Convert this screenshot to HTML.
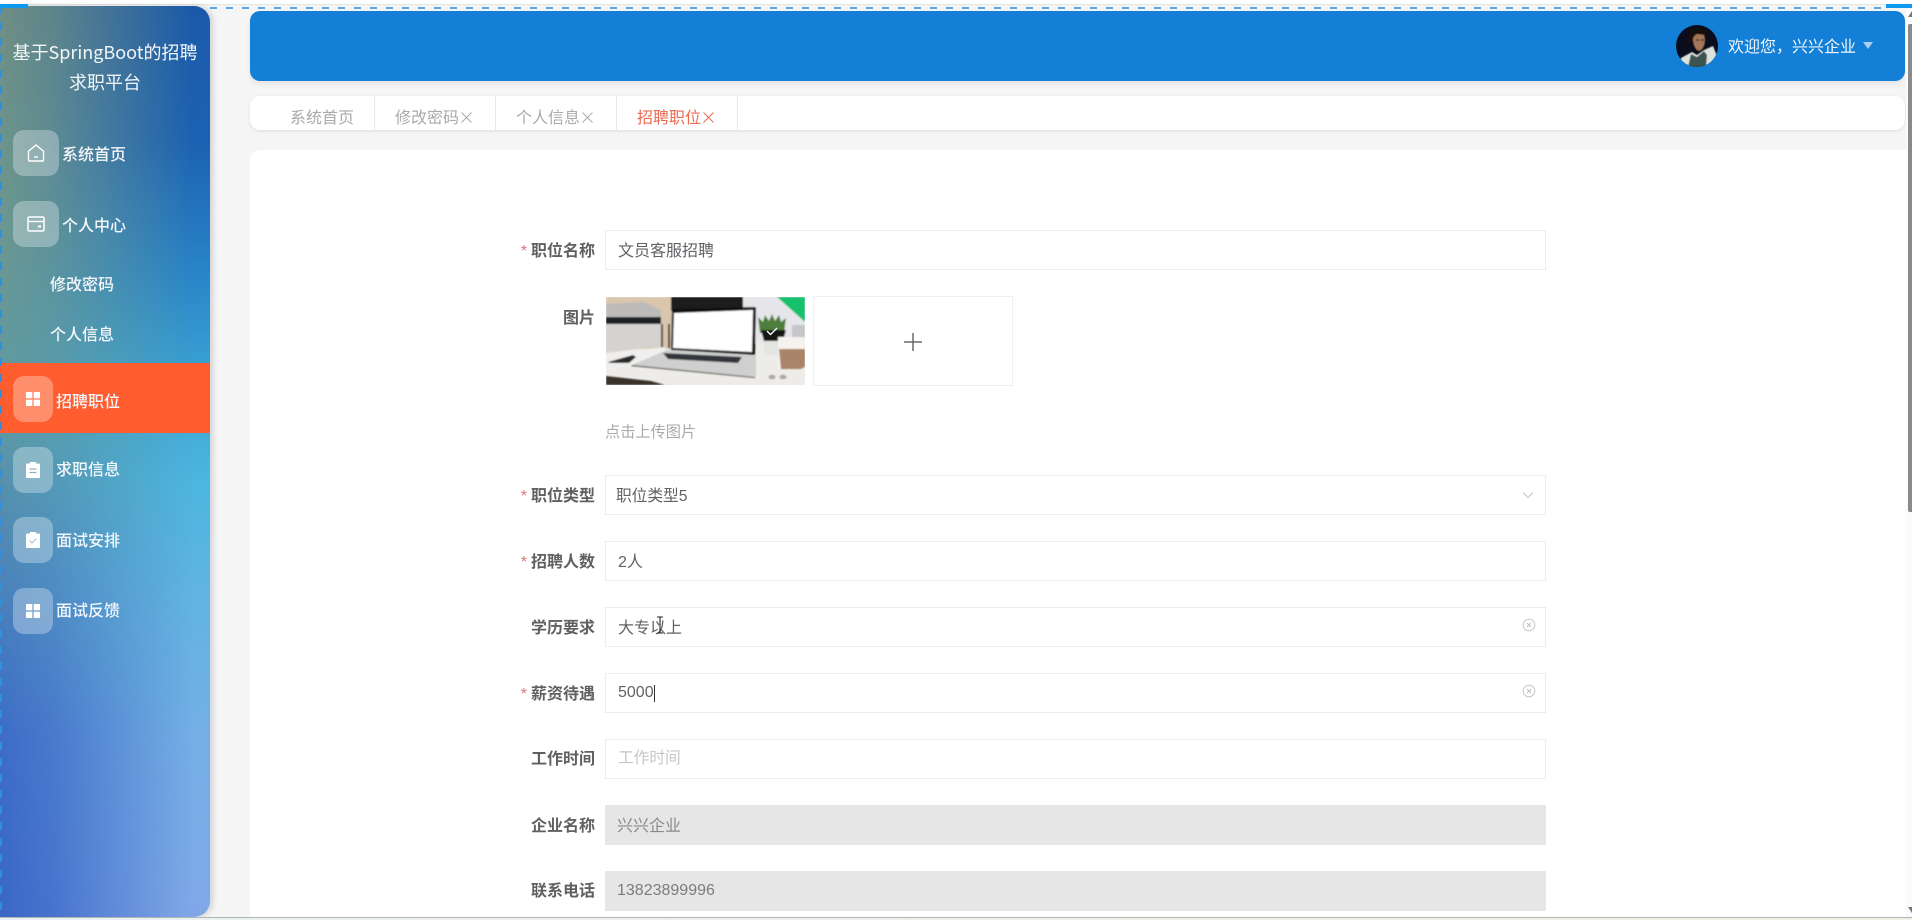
<!DOCTYPE html>
<html lang="zh">
<head>
<meta charset="utf-8">
<title>招聘职位</title>
<style>
html,body{margin:0;padding:0;width:1912px;height:920px;overflow:hidden;background:#f5f5f6;font-family:"Liberation Sans","Noto Sans CJK SC",sans-serif}
*{box-sizing:border-box}
.a{position:absolute}
#side{left:0;top:6px;width:210px;height:911px;border-radius:0 16px 16px 0;overflow:hidden;
background:linear-gradient(180deg,#1b5aa8 0%,#1c62b2 15%,#2a86c8 30%,#3ca6d6 42%,#4cb6de 52%,#62b4e2 65%,#74afe5 80%,#80a8e8 100%);box-shadow:3px 0 6px rgba(0,0,0,.14)}
#side:before{content:"";position:absolute;left:0;top:0;width:100%;height:100%;
background:linear-gradient(180deg,#6f8f84 0%,#6c9790 25%,#5e9aa2 45%,#4c84b8 62%,#3c6cc6 80%,#3a66c6 100%);
-webkit-mask-image:linear-gradient(90deg,#000 0%,rgba(0,0,0,.8) 25%,transparent 92%);mask-image:linear-gradient(90deg,#000 0%,rgba(0,0,0,.8) 25%,transparent 92%)}
.st{color:#f2f6f6;font-size:18px;line-height:30px;font-family:"Noto Sans CJK SC","Liberation Sans",sans-serif;left:0;width:210px;text-align:center;white-space:nowrap}
.ic{background:rgba(255,255,255,.3);border-radius:11px;left:13px;display:flex;align-items:center;justify-content:center}
.mt{color:#f3f7fa;font-size:16px;line-height:24px;white-space:nowrap;font-weight:500;margin-top:2px}
.lb{font-size:16px;font-weight:700;color:#606060;line-height:24px;white-space:nowrap;text-align:right;left:430px;width:165px;margin-top:2px}
.lb i{font-style:normal;color:#e8707c;font-weight:400;margin-right:4px}
.in{left:605px;width:941px;height:40px;border:1px solid #ececec;background:#fff}
.dis{background:#e6e6e7;border:0;height:40px}
.tx{left:618px;font-size:16px;line-height:24px;color:#606266;white-space:nowrap;margin-top:2px}
.tab{top:119px;transform:translateY(-50%);font-size:16px;line-height:24px;color:#aaa;white-space:nowrap;display:flex;align-items:center}
.tab svg{margin-left:2px;margin-top:-3px}
.sep{top:96px;width:1px;height:34px;background:#e9e9ec}
</style>
</head>
<body>
<!-- top strip -->
<div class="a" style="left:0;top:0;width:1912px;height:5px;background:#fff;border-bottom:1px solid #e4e4e4"></div>
<div class="a" style="left:210px;top:7px;width:1675px;height:2px;background:repeating-linear-gradient(90deg,#5aa6e6 0 7px,transparent 7px 16px)"></div>

<!-- sidebar -->
<div class="a" id="side">
  <div class="a st" style="top:31px">基于SpringBoot的招聘</div>
  <div class="a st" style="top:61px">求职平台</div>

  <div class="a ic" style="top:124px;width:46px;height:46px">
    <svg width="20" height="20" viewBox="0 0 20 20" fill="none" stroke="#fff" stroke-width="1.4"><path d="M2.500 8.200 10 2l7.500 6.200V17a1 1 0 0 1-1 1h-13a1 1 0 0 1-1-1z"/><path d="M8 14h4"/></svg>
  </div>
  <div class="a mt" style="left:62px;top:136px">系统首页</div>

  <div class="a ic" style="top:195px;width:46px;height:46px">
    <svg width="20" height="18" viewBox="0 0 20 18" fill="none" stroke="#fff" stroke-width="1.5"><rect x="2" y="2" width="16" height="14" rx="1.500"/><path d="M2 6.500h16"/><path d="M12 11.500h3" stroke-width="2"/></svg>
  </div>
  <div class="a mt" style="left:62px;top:207px">个人中心</div>

  <div class="a mt" style="left:50px;top:266px">修改密码</div>
  <div class="a mt" style="left:50px;top:316px">个人信息</div>

  <div class="a" style="left:0;top:357px;width:210px;height:70px;background:#ff5d2f"></div>
  <div class="a ic" style="top:370px;width:40px;height:46px">
    <svg width="14" height="14" viewBox="0 0 14 14" fill="#fff"><rect width="6.300" height="6.300" rx=".6"/><rect x="7.700" width="6.300" height="6.300" rx=".6"/><rect y="7.700" width="6.300" height="6.300" rx=".6"/><rect x="7.700" y="7.700" width="6.300" height="6.300" rx=".6"/></svg>
  </div>
  <div class="a mt" style="left:56px;top:383px">招聘职位</div>

  <div class="a ic" style="top:441px;width:40px;height:46px">
    <svg width="14" height="16" viewBox="0 0 14 16"><path fill="#fff" d="M4 0h6v1.500h3a1 1 0 0 1 1 1V15a1 1 0 0 1-1 1H1a1 1 0 0 1-1-1V2.500a1 1 0 0 1 1-1h3z"/><path stroke="#8fb0c0" stroke-width="1.200" d="M3.500 7h7M3.500 10.500h7"/></svg>
  </div>
  <div class="a mt" style="left:56px;top:451px">求职信息</div>

  <div class="a ic" style="top:511px;width:40px;height:46px">
    <svg width="14" height="16" viewBox="0 0 14 16"><path fill="#fff" d="M4 0h6v1.500h3a1 1 0 0 1 1 1V15a1 1 0 0 1-1 1H1a1 1 0 0 1-1-1V2.500a1 1 0 0 1 1-1h3z"/><path fill="none" stroke="#a9c0cc" stroke-width="1" d="M3.500 8.500 6 11l4.500-4.500"/></svg>
  </div>
  <div class="a mt" style="left:56px;top:522px">面试安排</div>

  <div class="a ic" style="top:582px;width:40px;height:46px">
    <svg width="14" height="14" viewBox="0 0 14 14" fill="#fff"><rect width="6.300" height="6.300" rx=".6"/><rect x="7.700" width="6.300" height="6.300" rx=".6"/><rect y="7.700" width="6.300" height="6.300" rx=".6"/><rect x="7.700" y="7.700" width="6.300" height="6.300" rx=".6"/></svg>
  </div>
  <div class="a mt" style="left:56px;top:592px">面试反馈</div>
</div>
<div class="a" style="left:0;top:6px;width:2px;height:911px;background:repeating-linear-gradient(180deg,#2f8fe0 0 8px,transparent 8px 16px)"></div>
<div class="a" style="left:0;top:4px;width:28px;height:4px;background:#0d9af0"></div>
<div class="a" style="left:1886px;top:4px;width:26px;height:4px;background:#0d9af0"></div>

<!-- header -->
<div class="a" style="left:250px;top:11px;width:1655px;height:70px;background:#137fd6;border-radius:10px;box-shadow:0 3px 6px rgba(0,0,0,.07)"></div>
<svg class="a" style="left:1676px;top:25px" width="42" height="42" viewBox="0 0 42 42">
  <defs><clipPath id="av"><circle cx="21" cy="21" r="21"/></clipPath><filter id="c"><feGaussianBlur stdDeviation=".5"/></filter></defs>
  <g clip-path="url(#av)">
    <rect width="42" height="42" fill="#0a0d1c"/>
    <g filter="url(#c)">
    <path d="M3 42 5 33l11-6 5 3 7-5 9-4 4 10v11z" fill="#dfe3df"/>
    <path d="M12 42l3-13 6 3 7-6 3 4-1 12z" fill="#3e524f"/>
    <path d="M17 15c0-6 3-8 6-8s6 2 6 8c0 5-2 10-6 11-3 0-6-6-6-11z" fill="#a67658"/>
    <path d="M12 20c-3-10 3-17 11-17 7 0 10 5 9 11l-3-4-8-1c-2 1-4 3-5 7z" fill="#14100e"/>
    <path d="M20 15h3M25 15h3" stroke="#2a1810" stroke-width="1.200"/>
    </g>
  </g>
</svg>
<div class="a" style="left:1728px;top:36px;font-size:16px;line-height:24px;color:#f0f6fc;white-space:nowrap">欢迎您，兴兴企业</div>
<div class="a" style="left:1863px;top:42px;width:0;height:0;border-left:5.500px solid transparent;border-right:5.500px solid transparent;border-top:7px solid #a8d0f0"></div>

<!-- tabs -->
<div class="a" style="left:250px;top:96px;width:1655px;height:34px;background:#fff;border-radius:10px;box-shadow:0 1px 3px rgba(0,0,0,.1)"></div>
<div class="a tab" style="left:290px">系统首页</div>
<div class="a sep" style="left:374px"></div>
<div class="a tab" style="left:395px">修改密码<svg width="11" height="11" viewBox="0 0 11 11"><path d="M.5.500l10 10M10.500.500l-10 10" stroke="#aaa" stroke-width="1"/></svg></div>
<div class="a sep" style="left:495px"></div>
<div class="a tab" style="left:516px">个人信息<svg width="11" height="11" viewBox="0 0 11 11"><path d="M.5.500l10 10M10.500.500l-10 10" stroke="#aaa" stroke-width="1"/></svg></div>
<div class="a sep" style="left:616px"></div>
<div class="a tab" style="left:637px;color:#ec6a52">招聘职位<svg width="11" height="11" viewBox="0 0 11 11"><path d="M.5.500l10 10M10.500.500l-10 10" stroke="#ec6a52" stroke-width="1"/></svg></div>
<div class="a sep" style="left:737px"></div>

<!-- content -->
<div class="a" style="left:250px;top:150px;width:1656px;height:767px;background:#fff;border-radius:10px 0 0 0"></div>

<!-- row: 职位名称 -->
<div class="a lb" style="top:238px"><i>*</i>职位名称</div>
<div class="a in" style="top:230px"></div>
<div class="a tx" style="top:238px">文员客服招聘</div>

<!-- row: 图片 -->
<div class="a lb" style="top:305px">图片</div>
<svg class="a" style="left:606px;top:297px" width="199" height="88" viewBox="0 0 199 88">
  <defs><filter id="b" x="0" y="0" width="100%" height="100%"><feGaussianBlur stdDeviation=".7"/></filter></defs>
  <rect width="199" height="88" fill="#eeece9"/>
  <g filter="url(#b)">
    <rect width="66" height="52" fill="#d9c6ad"/>
    <rect x="65" width="72" height="14" fill="#1c1b1c"/>
    <rect x="137" width="62" height="46" fill="#e6e6ea"/>
    <path d="M171 0h28v25z" fill="#19c06c"/>
    <path d="M186 28h13v16h-13z" fill="#c4c6ca"/>
    <path d="M0 7 38 5l17 8v7H0z" fill="#bdbbb9"/>
    <rect y="20" width="55" height="7" fill="#1e2028"/>
    <path d="M0 27h55v22L0 56z" fill="#d6d2cf"/>
    <path d="M55 27h2v24h-2zM62 27h2v24h-2z" fill="#4a3c30"/>
    <path d="M0 56 58 50l8 6-40 12-26 6z" fill="#f0efed"/>
    <path d="M2 65 27 58l3 2-7 6H4z" fill="#2c2c2e"/>
    <path d="M26 68 61 53l89 5v22z" fill="#cfcfcf"/>
    <path d="M65 53 66 13q0-1 1-1l82-2q1 0 1 1l-1 47z" fill="#111"/>
    <path d="M68 16 147 13l-1 42-79-4z" fill="#fff"/>
    <path d="M57 56 136 60l-4 6-70-4z" fill="#33343a"/>
    <path d="M26 68 149 80v1L25 69z" fill="#45433a"/>
    <path d="M0 79 45 84l14 4H0z" fill="#38322c"/>
    <path d="M152 20l5 5 2-7 4 6 3-7 3 7 4-6 2 7 5-4-2 15h-24z" fill="#4d7e3a"/>
    <path d="M155 33h25l-3 11h-19z" fill="#141414"/>
    <path d="M157 44h15l1 14h-14z" fill="#e4e4e0"/>
    <path d="M172 40h27v32h-27z" fill="#f6f2ee"/>
    <path d="M173 52h26v18l-4 2h-20z" fill="#a98468"/>
    <ellipse cx="166" cy="80" rx="3.500" ry="2.200" fill="#a8a8a4"/><ellipse cx="177" cy="80" rx="3.500" ry="2.200" fill="#a8a8a4"/>
  </g>
  <path d="M161 34l3.500 3.500 6.500-6.500" fill="none" stroke="#fff" stroke-width="1.400"/>
</svg>
<div class="a" style="left:813px;top:296px;width:200px;height:90px;border:1px solid #f0f0f2;background:#fff"></div>
<svg class="a" style="left:903px;top:332px" width="20" height="20" viewBox="0 0 20 20"><path d="M10 1v18M1 10h18" stroke="#6a6a6c" stroke-width="1.500"/></svg>
<div class="a" style="left:605px;top:421px;font-size:15.200px;line-height:24px;color:#aaa;white-space:nowrap">点击上传图片</div>

<!-- row: 职位类型 -->
<div class="a lb" style="top:483px"><i>*</i>职位类型</div>
<div class="a in" style="top:475px"></div>
<div class="a tx" style="top:483px;left:616px;font-size:15.700px">职位类型5</div>
<svg class="a" style="left:1522px;top:490px" width="12" height="10" viewBox="0 0 12 10"><path d="M1 2.500 6 7.500l5-5" fill="none" stroke="#c6c8cc" stroke-width="1.100"/></svg>

<!-- row: 招聘人数 -->
<div class="a lb" style="top:549px"><i>*</i>招聘人数</div>
<div class="a in" style="top:541px"></div>
<div class="a tx" style="top:549px">2人</div>

<!-- row: 学历要求 -->
<div class="a lb" style="top:615px">学历要求</div>
<div class="a in" style="top:607px"></div>
<div class="a tx" style="top:615px">大专以上</div>
<svg class="a" style="left:654px;top:616px" width="12" height="18" viewBox="0 0 12 18"><path d="M3 1h6M3 17h6M6 1v16" stroke="#222" stroke-width="1.100" fill="none"/></svg>
<svg class="a" style="left:1522px;top:618px" width="14" height="14" viewBox="0 0 14 14"><circle cx="7" cy="7" r="5.800" fill="none" stroke="#c6c8cc" stroke-width="1"/><path d="M5 5l4 4M9 5l-4 4" stroke="#c0c2c6"/></svg>

<!-- row: 薪资待遇 -->
<div class="a lb" style="top:681px"><i>*</i>薪资待遇</div>
<div class="a in" style="top:673px"></div>
<div class="a tx" style="top:679px">5000</div>
<div class="a" style="left:654px;top:685px;width:1px;height:17px;background:#333"></div>
<svg class="a" style="left:1522px;top:684px" width="14" height="14" viewBox="0 0 14 14"><circle cx="7" cy="7" r="5.800" fill="none" stroke="#c6c8cc" stroke-width="1"/><path d="M5 5l4 4M9 5l-4 4" stroke="#c0c2c6"/></svg>

<!-- row: 工作时间 -->
<div class="a lb" style="top:746px">工作时间</div>
<div class="a in" style="top:739px"></div>
<div class="a tx" style="top:745px;color:#c4c6ca;font-size:15.700px">工作时间</div>

<!-- row: 企业名称 -->
<div class="a lb" style="top:813px">企业名称</div>
<div class="a in dis" style="top:805px"></div>
<div class="a tx" style="top:813px;left:617px;color:#8a8a8c">兴兴企业</div>

<!-- row: 联系电话 -->
<div class="a lb" style="top:878px">联系电话</div>
<div class="a in dis" style="top:871px"></div>
<div class="a tx" style="top:877px;left:617px;color:#7c7c7e;font-size:16px">13823899996</div>

<!-- scrollbar -->
<div class="a" style="left:1906px;top:9px;width:6px;height:908px;background:#fbfbfb"></div>
<div class="a" style="left:1908px;top:24px;width:4px;height:488px;background:#8a8a8a;border-radius:2px 0 0 2px"></div>
<div class="a" style="left:1908px;top:11px;width:0;height:0;border-left:4px solid transparent;border-right:4px solid transparent;border-bottom:6px solid #777"></div>
<div class="a" style="left:1908px;top:907px;width:0;height:0;border-left:4px solid transparent;border-right:4px solid transparent;border-top:6px solid #777"></div>

<!-- bottom line -->
<div class="a" style="left:0;top:917px;width:1912px;height:3px;background:linear-gradient(90deg,#e8f2f6 0%,#eeeeea 40%,#f2f0e4 100%);border-top:1px solid #b4b4b4"></div>
</body>
</html>
